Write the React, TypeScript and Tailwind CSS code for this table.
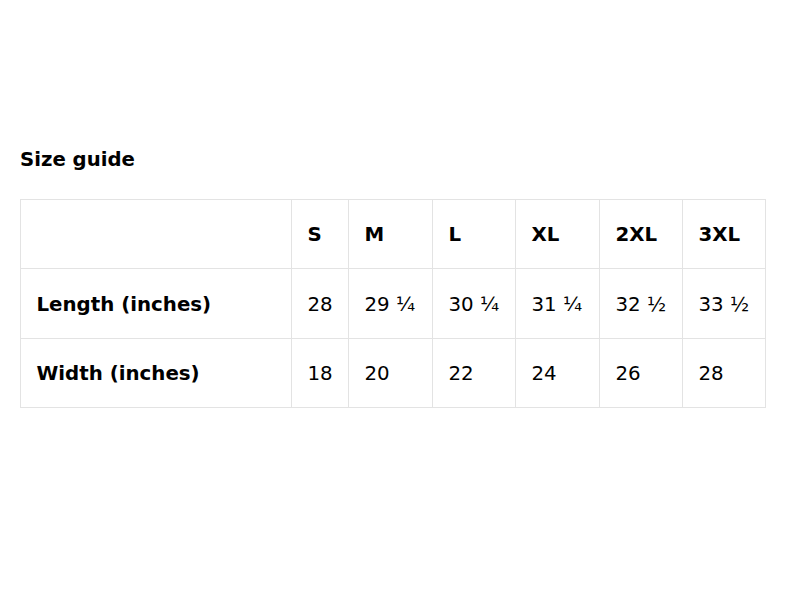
import React from "react";

const sizes = ["S", "M", "L", "XL", "2XL", "3XL"];
const rows: { label: string; values: string[] }[] = [
  { label: "Length (inches)", values: ["28", "29 ¼", "30 ¼", "31 ¼", "32 ½", "33 ½"] },
  { label: "Width (inches)", values: ["18", "20", "22", "24", "26", "28"] },
];
const widths = [271, 57, 84, 83, 84, 83, 83];

export default function App() {
  return (
    <div
      className="w-[797px] h-[598px] bg-white text-black px-5 pt-[148px]"
      style={{ fontFamily: '"DejaVu Sans", Verdana, sans-serif' }}
    >
      <h2 className="text-[19.7px] leading-[24px] font-bold">Size guide</h2>
      <table className="mt-[27px] table-fixed border-collapse w-[746px] text-[19.8px]">
        <colgroup>
          {widths.map((w, i) => (
            <col key={i} style={{ width: w }} />
          ))}
        </colgroup>
        <thead>
          <tr className="h-[69px]">
            <th className="border border-[#e3e3e3]"></th>
            {sizes.map((s) => (
              <th key={s} className="border border-[#e3e3e3] pl-[15.5px] pr-4 pt-[2px] text-left font-bold">
                {s}
              </th>
            ))}
          </tr>
        </thead>
        <tbody>
          {rows.map((r, idx) => (
            <tr key={r.label} className={idx === 0 ? "h-[70px]" : "h-[69px]"}>
              <td className="border border-[#e3e3e3] pl-[15.5px] pr-4 pt-[2px] font-bold">{r.label}</td>
              {r.values.map((v, i) => (
                <td key={i} className="border border-[#e3e3e3] pl-[15.5px] pr-4 pt-[2px] whitespace-nowrap">
                  {v}
                </td>
              ))}
            </tr>
          ))}
        </tbody>
      </table>
    </div>
  );
}
